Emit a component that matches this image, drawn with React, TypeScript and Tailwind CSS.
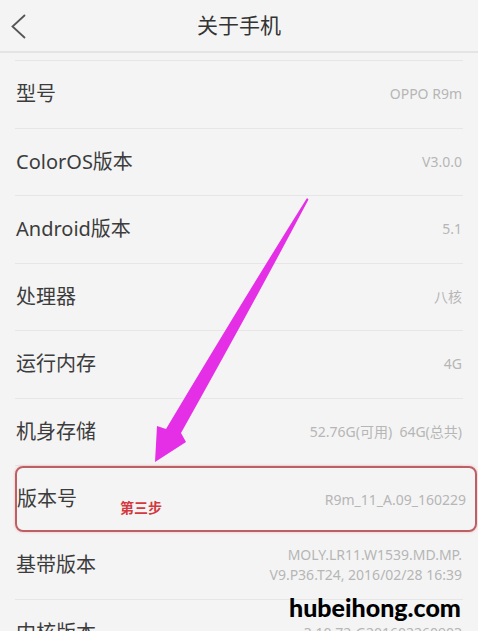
import React from "react";

type Row = {
  label: string;
  value: string[];
};

const rows: Row[] = [
  { label: "型号", value: ["OPPO R9m"] },
  { label: "ColorOS版本", value: ["V3.0.0"] },
  { label: "Android版本", value: ["5.1"] },
  { label: "处理器", value: ["八核"] },
  { label: "运行内存", value: ["4G"] },
  { label: "机身存储", value: ["52.76G(可用)\u00a0\u00a064G(总共)"] },
];

const font = { fontFamily: '"Noto Sans", "Noto Sans CJK SC", sans-serif' };

function InfoRow({ row }: { row: Row }) {
  return (
    <div className="mx-[15px] flex h-[67.5px] items-center justify-between border-b border-[#e6e6e6]">
      <span className="pl-[1px] text-[20px] text-[#3c3c3c]">{row.label}</span>
      <div className="flex flex-col items-end pr-[1px] text-[14px] leading-[20px] text-[#b6b6b6]">
        {row.value.map((v) => (
          <span key={v}>{v}</span>
        ))}
      </div>
    </div>
  );
}

export default function App() {
  return (
    <div
      className="relative h-[631px] w-[478px] overflow-hidden bg-[#f4f4f4]"
      style={font}
    >
      {/* header */}
      <div className="relative flex h-[53px] items-center justify-center border-b-2 border-[#e4e4e4]">
        <svg
          className="absolute left-0 top-0"
          width="40"
          height="53"
          viewBox="0 0 40 53"
        >
          <path
            d="M25 15 L12.5 26.5 L25 38"
            fill="none"
            stroke="#555"
            strokeWidth="1.8"
          />
        </svg>
        <span className="text-[21px] text-[#333]">关于手机</span>
      </div>

      <div className="mx-[15px] h-[8px] border-b border-[#e6e6e6]" />

      {rows.map((r) => (
        <InfoRow key={r.label} row={r} />
      ))}

      {/* highlighted row */}
      <div className="relative ml-[15px] mr-[1px] flex h-[66px] items-center justify-between rounded-[8px] border-2 border-[#bd6066] shadow-[0_0_3px_#f2b5b8]">
        <span className="text-[20px] text-[#3c3c3c]">版本号</span>
        <span className="pr-[9px] text-[14px] text-[#b6b6b6]">R9m_11_A.09_160229</span>
        <span className="absolute left-[103px] top-[32px] text-[14px] font-bold leading-[16px] text-[#d13a3f]">
          第三步
        </span>
      </div>

      <InfoRow
        row={{
          label: "基带版本",
          value: ["MOLY.LR11.W1539.MD.MP.", "V9.P36.T24, 2016/02/28 16:39"],
        }}
      />
      <InfoRow row={{ label: "内核版本", value: ["3.10.72-G201602260903"] }} />

      {/* annotation arrow */}
      <svg
        className="pointer-events-none absolute left-0 top-0"
        width="478"
        height="631"
        viewBox="0 0 478 631"
      >
        <path
          d="M307 198 L308.5 199.5 Q250 310 181 433 L186 442 L155 462 L157 426 L166 429 Q240 305 307 198 Z"
          fill="#e52fe6"
        />
      </svg>

      {/* watermark */}
      <span
        className="absolute left-[289px] top-[592px] text-[25px] font-black leading-[30px] text-black"
        style={{ fontFamily: '"Lato", "DejaVu Sans", sans-serif' }}
      >
        hubeihong.com
      </span>
    </div>
  );
}
